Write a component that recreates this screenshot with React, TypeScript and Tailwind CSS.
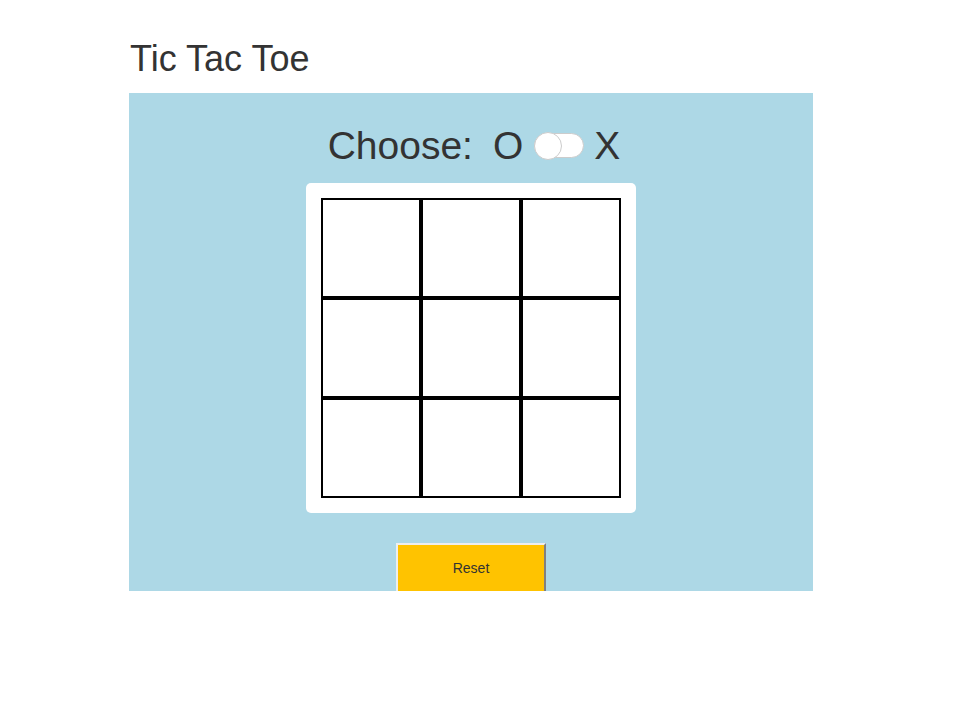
import React from "react";

export default function App() {
  const cells = Array.from({ length: 9 });
  return (
    <div className="w-[960px] h-[720px] bg-white" style={{ fontFamily: '"Liberation Sans", Arial, sans-serif' }}>
      <div className="ml-[129px] w-[684px]">
        <h1 className="pt-[39px] h-[93px] text-[36px] leading-[40px] text-[#333] pl-[1px]">Tic Tac Toe</h1>
        <div className="h-[498px] bg-[#add8e6] overflow-hidden flex flex-col items-center pt-[30px]">
          <div className="flex items-center h-[45px] text-[39px] leading-[45px] text-[#333] ml-[6px]">
            <span>Choose:</span>
            <span className="ml-[20px]">O</span>
            <div className="ml-[11px] relative w-[50px] h-[25px] rounded-full bg-white border border-[#ccc]">
              <div className="absolute left-[-1px] top-[-2px] w-[28px] h-[28px] rounded-full bg-white border border-[#ccc]" />
            </div>
            <span className="ml-[10px]">X</span>
          </div>
          <div className="mt-[15px] w-[330px] h-[330px] bg-white rounded-[5px] p-[15px]">
            <div className="grid grid-cols-3 w-[300px] h-[300px]">
              {cells.map((_, i) => (
                <div key={i} className="border-2 border-black bg-white" />
              ))}
            </div>
          </div>
          <button className="mt-[30px] shrink-0 w-[150px] h-[50px] bg-[#ffc300] border-2 border-t-[#eeeeee] border-l-[#eeeeee] border-r-[#808080] border-b-[#808080] text-[14px] text-[#333]">
            Reset
          </button>
        </div>
      </div>
    </div>
  );
}
